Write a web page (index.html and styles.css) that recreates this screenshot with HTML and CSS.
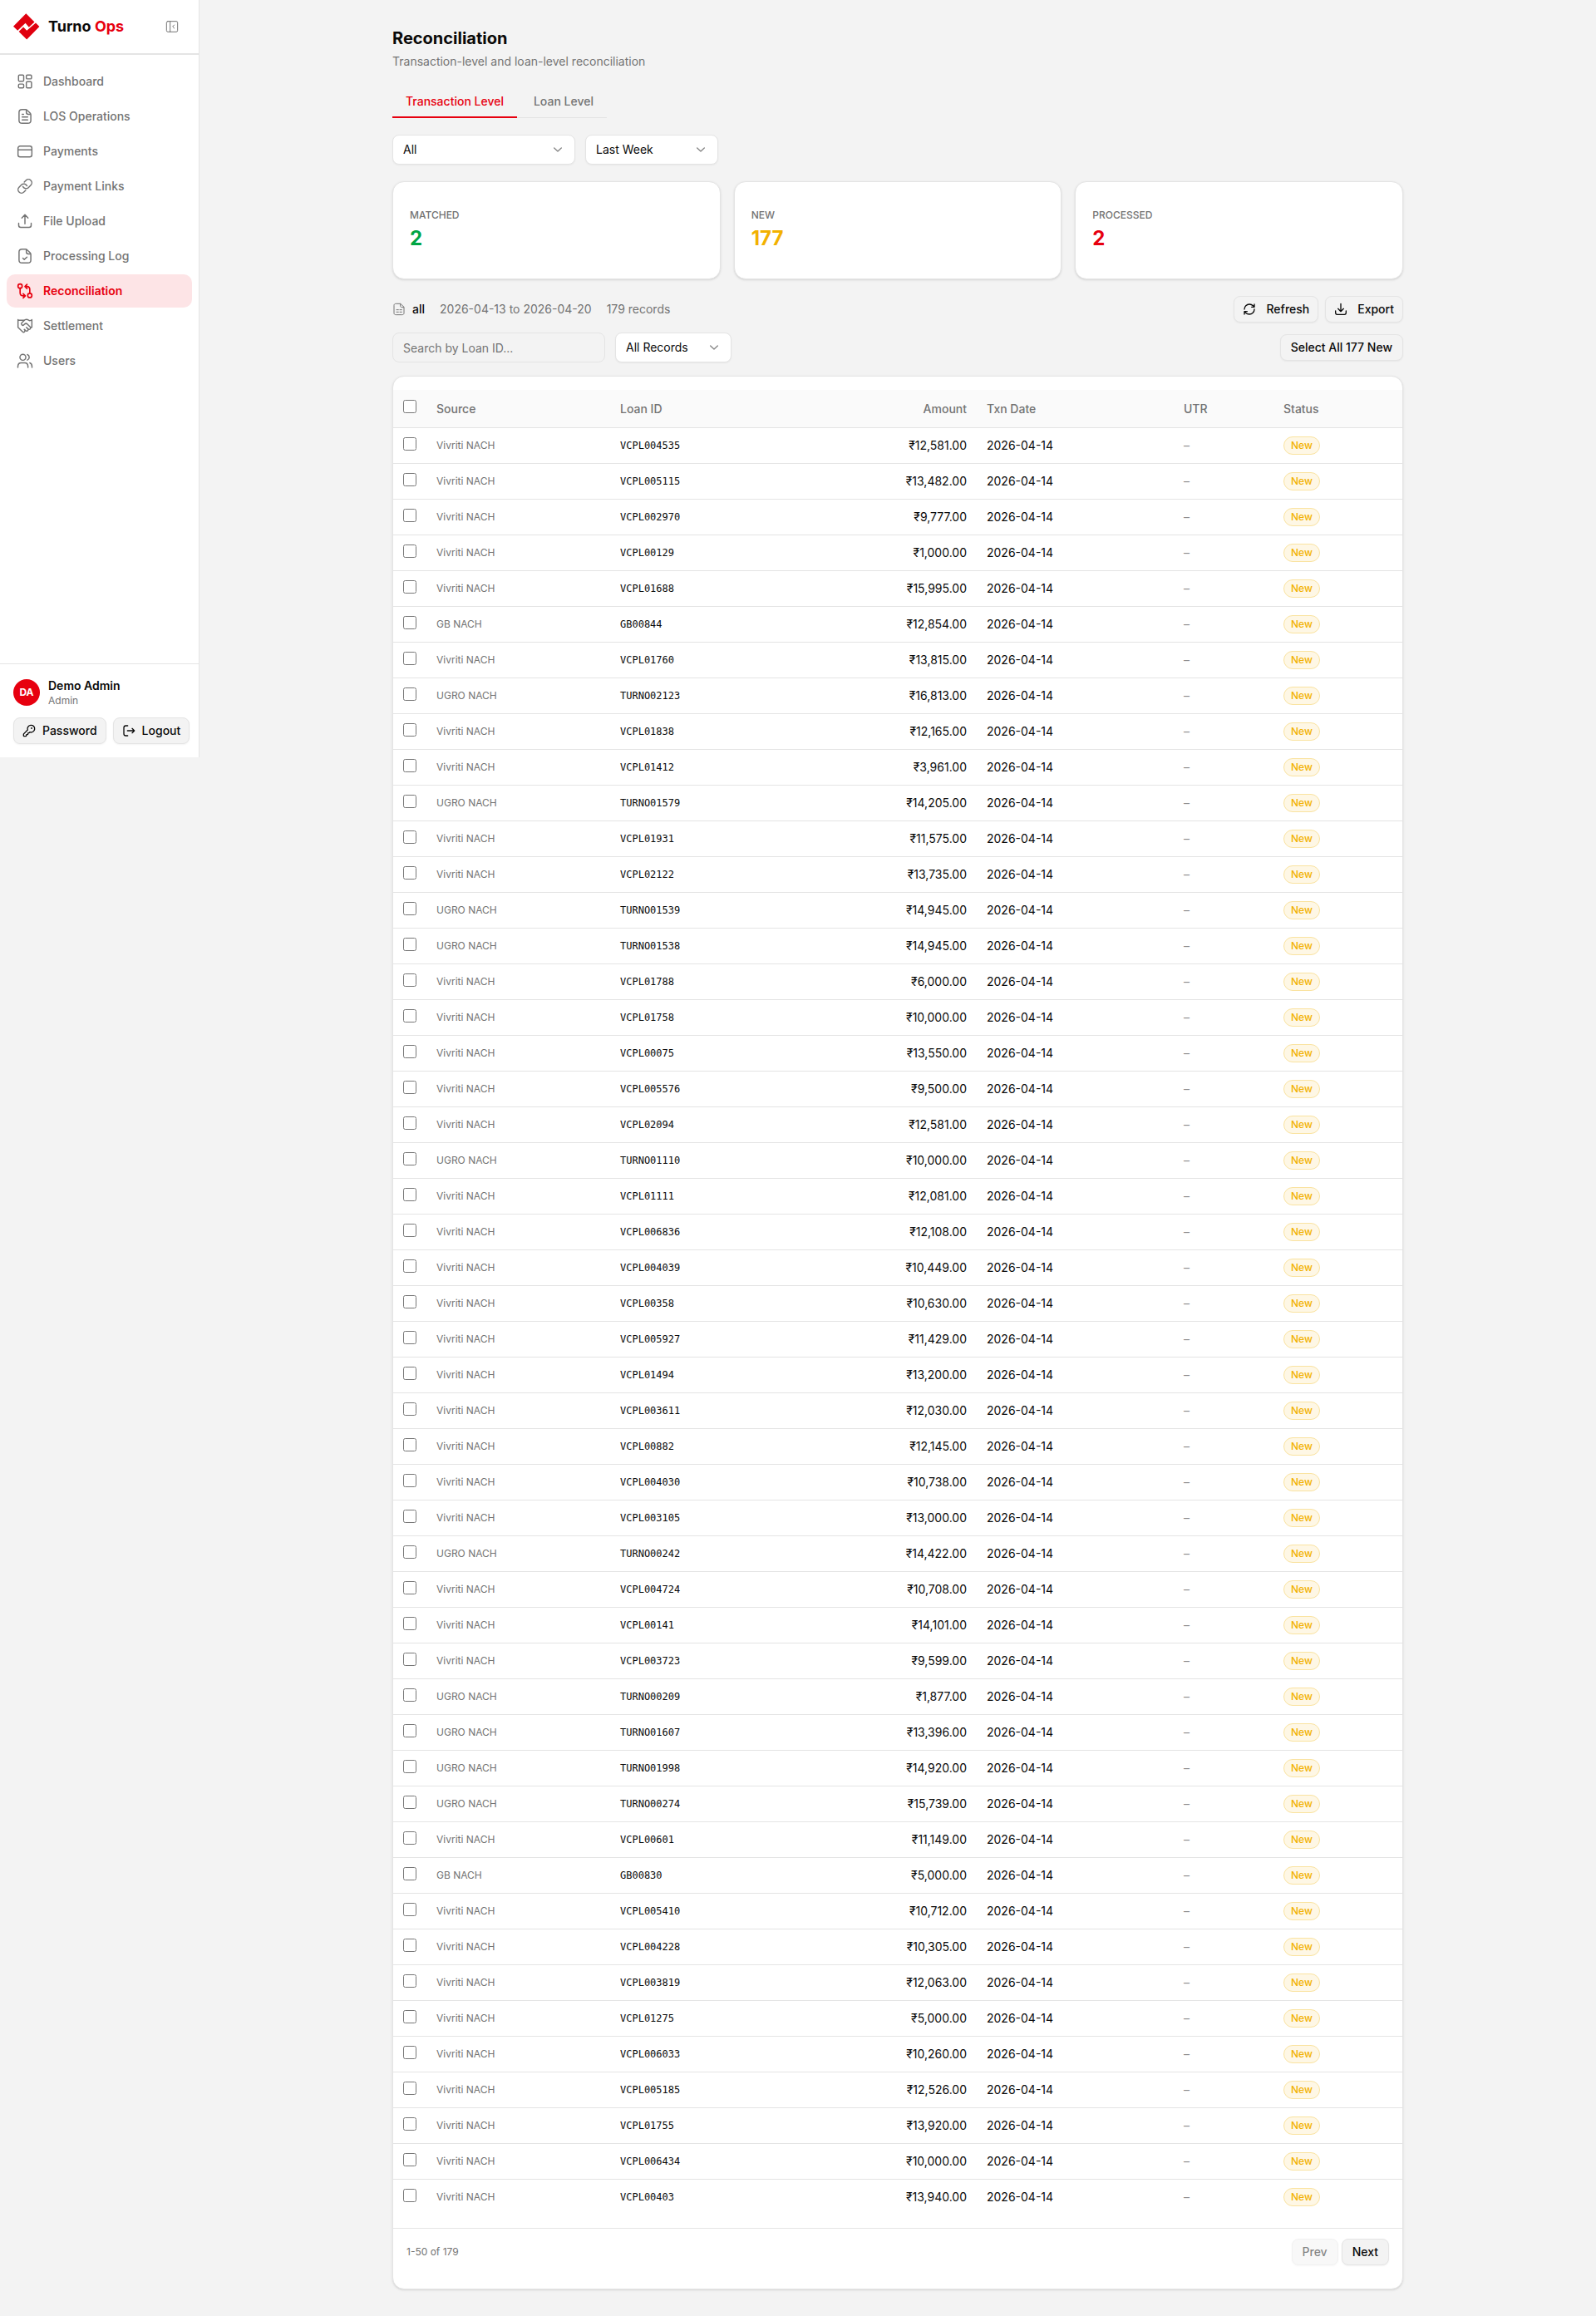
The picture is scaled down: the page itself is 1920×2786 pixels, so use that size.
FILE: index.html
```html
<!DOCTYPE html>
<html lang="en">
<head>
    <meta charset="UTF-8">
    <meta name="viewport" content="width=device-width, initial-scale=1">
    <title>Reconciliation - Turno Ops</title>
    <link rel="stylesheet" href="styles.css">
</head>
<body>
    <aside class="sidebar">
        <div class="brand">
            <svg class="logo" viewBox="0 0 32 32" aria-hidden="true">
                <path d="M0 15.700L15.300.3l10.200 10.200-6.700 6.300-4.200-5L5.200 20.800z"/>
                <path d="M31.400 16L16.200 31.400 6.600 21.900l5.500-5.300 4.100 4.200L27 11.600z"/>
            </svg>
            <span class="brand-name">Turno <span class="accent">Ops</span></span>
            <button class="collapse" aria-label="Collapse sidebar">
                <svg class="icon" viewBox="0 0 24 24"><rect x="2" y="2.5" width="20" height="19" rx="2.5"/><path d="M8.500 2.500v19M16 9l-3 3 3 3"/></svg>
            </button>
        </div>

        <nav class="nav">
            <a href="#" class="nav-link">
                <svg class="icon" viewBox="0 0 24 24"><rect x="2.75" y="2.75" width="7.5" height="9" rx="1.5"/><rect x="14" y="2.75" width="7.5" height="5.5" rx="1.5"/><rect x="2.75" y="15.75" width="7.5" height="5.5" rx="1.5"/><rect x="14" y="12.25" width="7.5" height="9" rx="1.5"/></svg>
                Dashboard
            </a>
            <a href="#" class="nav-link">
                <svg class="icon" viewBox="0 0 24 24"><path d="M13 2H8C5 2 3.500 3.500 3.500 6v12c0 2.500 1.500 4 4.500 4h8c3 0 4.500-1.500 4.500-4V9.500c0-1-.3-1.700-1-2.400L15 3c-.6-.7-1.200-1-2-1zM14 2.500V6c0 2 1 3 3 3h3.200M8 17h8M8 13h8M8 9h2"/></svg>
                LOS Operations
            </a>
            <a href="#" class="nav-link">
                <svg class="icon" viewBox="0 0 24 24"><rect x="2" y="4.5" width="20" height="15.5" rx="3"/><path d="M2 10h20"/></svg>
                Payments
            </a>
            <a href="#" class="nav-link">
                <svg class="icon" viewBox="0 0 24 24"><path d="M9 12.500a5 5 0 0 0 8 1.500l3.500-3.500a4.950 4.950 0 0 0-7-7L11 6"/><path d="M15 11.500a5 5 0 0 0-8-1.500l-3.500 3.500a4.950 4.950 0 0 0 7 7L13 18"/></svg>
                Payment Links
            </a>
            <a href="#" class="nav-link">
                <svg class="icon" viewBox="0 0 24 24"><path d="M3 15v3c0 2 1 3 3 3h12c2 0 3-1 3-3v-3M12 16V3M7.500 7.500L12 2.750l4.500 4.750"/></svg>
                File Upload
            </a>
            <a href="#" class="nav-link">
                <svg class="icon" viewBox="0 0 24 24"><path d="M13 2H8C5 2 3.500 3.500 3.500 6v12c0 2.500 1.500 4 4.500 4h8c3 0 4.500-1.500 4.500-4V9.500c0-1-.3-1.700-1-2.400L15 3c-.6-.7-1.200-1-2-1zM14 2.500V6c0 2 1 3 3 3h3.200M9 15l2 2 4-3.500"/></svg>
                Processing Log
            </a>
            <a href="#" class="nav-link active" aria-current="page">
                <svg class="icon" viewBox="0 0 24 24"><circle cx="5" cy="5" r="3"/><circle cx="19" cy="18.500" r="3"/><path d="M5 8v6.500C5 17.500 6 19 9 19h2.500M9.500 16l3 3-3 3M19 15.500V10c0-3-1-4.500-4-4.500h-2.500M15 2.500l-3 3 3 3"/></svg>
                Reconciliation
            </a>
            <a href="#" class="nav-link">
                <svg class="icon" viewBox="0 0 24 24"><path d="m11 17 2 2a1 1 0 1 0 3-3"/><path d="m14 14 2.500 2.500a1 1 0 1 0 3-3l-3.880-3.880a3 3 0 0 0-4.240 0l-.880.880a1 1 0 1 1-3-3l2.810-2.810a5.790 5.790 0 0 1 7.060-.870l.470.280a2 2 0 0 0 1.420.250L22 4"/><path d="M22 3v11h-2M2 3v11l6.500 6.500a1 1 0 1 0 3-3M2 4h9"/></svg>
                Settlement
            </a>
            <a href="#" class="nav-link">
                <svg class="icon" viewBox="0 0 24 24"><circle cx="9" cy="7" r="4.250"/><path d="M1.800 21.500v-1c0-3.500 1.700-5.500 4.700-5.500h5.200c3 0 4.700 2 4.700 5.500v1M15.500 3a4.300 4.300 0 0 1 0 8M19 15c2.300.7 3.200 2.800 3.200 5.500v1"/></svg>
                Users
            </a>
        </nav>

        <div class="account">
            <div class="account-user">
                <span class="avatar">DA</span>
                <div>
                    <div class="account-name">Demo Admin</div>
                    <div class="account-role">Admin</div>
                </div>
            </div>
            <div class="account-actions">
                <button class="btn btn-icon">
                    <svg class="icon" viewBox="0 0 24 24"><path d="M2.600 17.400A2 2 0 0 0 2 18.800V21a1 1 0 0 0 1 1h3a1 1 0 0 0 1-1v-1a1 1 0 0 1 1-1h1a1 1 0 0 0 1-1v-1a1 1 0 0 1 1-1h.2a2 2 0 0 0 1.400-.6l.8-.8a6.500 6.500 0 1 0-4-4z"/><circle cx="16.500" cy="7.500" r=".5"/></svg>
                    Password
                </button>
                <button class="btn btn-icon">
                    <svg class="icon" viewBox="0 0 24 24"><path d="M10 3H6.500C4 3 3 4 3 6.500v11C3 20 4 21 6.500 21H10M9.500 12H22M18 8l4 4-4 4"/></svg>
                    Logout
                </button>
            </div>
        </div>
    </aside>

    <main class="main">
        <div class="container">
            <header>
                <h1>Reconciliation</h1>
                <p class="subtitle">Transaction-level and loan-level reconciliation</p>
            </header>

            <div class="tabs" role="tablist">
                <button class="tab active" role="tab" aria-selected="true">Transaction Level</button>
                <button class="tab" role="tab" aria-selected="false">Loan Level</button>
            </div>

            <div class="filters">
                <div class="select select-source">
                    <select aria-label="Source"><option>All</option></select>
                    <svg class="icon chevron" viewBox="0 0 24 24"><path d="M5.500 9l6.500 6 6.500-6"/></svg>
                </div>
                <div class="select select-period">
                    <select aria-label="Period"><option>Last Week</option></select>
                    <svg class="icon chevron" viewBox="0 0 24 24"><path d="M5.500 9l6.500 6 6.500-6"/></svg>
                </div>
            </div>

            <div class="stats">
                <div class="card stat">
                    <div class="stat-label">Matched</div>
                    <div class="stat-value green">2</div>
                </div>
                <div class="card stat">
                    <div class="stat-label">New</div>
                    <div class="stat-value amber">177</div>
                </div>
                <div class="card stat">
                    <div class="stat-label">Processed</div>
                    <div class="stat-value accent">2</div>
                </div>
            </div>

            <section class="records">
                <div class="toolbar">
                    <div class="summary">
                        <span class="summary-source">
                            <svg class="icon" viewBox="0 0 24 24"><path d="M14 2H6.500C4.500 2 3 3 3 5v14c0 2 1.500 3 3.500 3h11c2 0 3.500-1 3.500-3V8.500zM14.500 2.500V6c0 1.500 1 2.500 2.500 2.500h3.500M7.500 13H11M13.500 13H17M7.500 17H11M13.500 17H17"/></svg>
                            <strong>all</strong>
                        </span>
                        <span>2026-04-13 to 2026-04-20</span>
                        <span>179 records</span>
                    </div>
                    <div class="actions">
                        <button class="btn btn-wide-icon">
                            <svg class="icon" viewBox="0 0 24 24"><path d="M3 12a9 9 0 0 1 9-9 9.750 9.750 0 0 1 6.740 2.740L21 8M21 3v5h-5M21 12a9 9 0 0 1-9 9 9.750 9.750 0 0 1-6.740-2.740L3 16M8 16H3v5"/></svg>
                            Refresh
                        </button>
                        <button class="btn btn-wide-icon">
                            <svg class="icon" viewBox="0 0 24 24"><path d="M2.500 15v3c0 2 1 3.500 3 3.500h13c2 0 3-1.500 3-3.500v-3M12 2v14M7 11l5 5 5-5"/></svg>
                            Export
                        </button>
                    </div>
                </div>

                <div class="toolbar">
                    <div class="filters">
                        <input type="text" class="search" placeholder="Search by Loan ID..." aria-label="Search by Loan ID">
                        <div class="select select-records">
                            <select aria-label="Records"><option>All Records</option></select>
                            <svg class="icon chevron" viewBox="0 0 24 24"><path d="M5.500 9l6.500 6 6.500-6"/></svg>
                        </div>
                    </div>
                    <button class="btn">Select All 177 New</button>
                </div>
            </section>

            <div class="card table-card">
                <table>
                    <colgroup>
                        <col class="col-check">
                        <col class="col-source">
                        <col class="col-loan">
                        <col class="col-amount">
                        <col class="col-date">
                        <col class="col-utr">
                        <col class="col-status">
                    </colgroup>
                    <thead>
                        <tr>
                            <th><input type="checkbox" aria-label="Select all"></th>
                            <th>Source</th>
                            <th>Loan ID</th>
                            <th class="amount">Amount</th>
                            <th>Txn Date</th>
                            <th>UTR</th>
                            <th>Status</th>
                        </tr>
                    </thead>
                    <tbody id="rows"></tbody>
                </table>
                <div class="pager">
                    <span>1-50 of 179</span>
                    <div class="pager-buttons">
                        <button class="btn" disabled>Prev</button>
                        <button class="btn">Next</button>
                    </div>
                </div>
            </div>
        </div>
    </main>

    <script>
        const sources = { V: 'Vivriti NACH', U: 'UGRO NACH', G: 'GB NACH' };

        // source, loan id, amount
        const records = [
            ['V', 'VCPL004535', '12,581'],
            ['V', 'VCPL005115', '13,482'],
            ['V', 'VCPL002970', '9,777'],
            ['V', 'VCPL00129', '1,000'],
            ['V', 'VCPL01688', '15,995'],
            ['G', 'GB00844', '12,854'],
            ['V', 'VCPL01760', '13,815'],
            ['U', 'TURNO02123', '16,813'],
            ['V', 'VCPL01838', '12,165'],
            ['V', 'VCPL01412', '3,961'],
            ['U', 'TURNO01579', '14,205'],
            ['V', 'VCPL01931', '11,575'],
            ['V', 'VCPL02122', '13,735'],
            ['U', 'TURNO01539', '14,945'],
            ['U', 'TURNO01538', '14,945'],
            ['V', 'VCPL01788', '6,000'],
            ['V', 'VCPL01758', '10,000'],
            ['V', 'VCPL00075', '13,550'],
            ['V', 'VCPL005576', '9,500'],
            ['V', 'VCPL02094', '12,581'],
            ['U', 'TURNO01110', '10,000'],
            ['V', 'VCPL01111', '12,081'],
            ['V', 'VCPL006836', '12,108'],
            ['V', 'VCPL004039', '10,449'],
            ['V', 'VCPL00358', '10,630'],
            ['V', 'VCPL005927', '11,429'],
            ['V', 'VCPL01494', '13,200'],
            ['V', 'VCPL003611', '12,030'],
            ['V', 'VCPL00882', '12,145'],
            ['V', 'VCPL004030', '10,738'],
            ['V', 'VCPL003105', '13,000'],
            ['U', 'TURNO00242', '14,422'],
            ['V', 'VCPL004724', '10,708'],
            ['V', 'VCPL00141', '14,101'],
            ['V', 'VCPL003723', '9,599'],
            ['U', 'TURNO00209', '1,877'],
            ['U', 'TURNO01607', '13,396'],
            ['U', 'TURNO01998', '14,920'],
            ['U', 'TURNO00274', '15,739'],
            ['V', 'VCPL00601', '11,149'],
            ['G', 'GB00830', '5,000'],
            ['V', 'VCPL005410', '10,712'],
            ['V', 'VCPL004228', '10,305'],
            ['V', 'VCPL003819', '12,063'],
            ['V', 'VCPL01275', '5,000'],
            ['V', 'VCPL006033', '10,260'],
            ['V', 'VCPL005185', '12,526'],
            ['V', 'VCPL01755', '13,920'],
            ['V', 'VCPL006434', '10,000'],
            ['V', 'VCPL00403', '13,940']
        ];

        document.getElementById('rows').innerHTML = records.map(([source, loan, amount]) => `
            <tr>
                <td><input type="checkbox" aria-label="Select ${loan}"></td>
                <td class="source">${sources[source]}</td>
                <td class="loan">${loan}</td>
                <td class="amount">₹${amount}.00</td>
                <td>2026-04-14</td>
                <td class="empty">–</td>
                <td><span class="badge">New</span></td>
            </tr>`).join('');
    </script>
</body>
</html>
```
FILE: styles.css
```css
* {
    box-sizing: border-box;
}

body {
    margin: 0;
    display: flex;
    align-items: flex-start;
    background-color: #f3f3f3;
    color: #0a0a0a;
    font-family: "Inter", sans-serif;
    font-size: 14px;
    line-height: 20px;
}

button, input, select {
    font: inherit;
    color: inherit;
}

button {
    cursor: pointer;
}

h1 {
    margin: 0 0 4px;
    font-size: 20px;
    line-height: 28px;
    font-weight: 700;
}

.icon {
    width: 16px;
    height: 16px;
    flex-shrink: 0;
    fill: none;
    stroke: currentColor;
    stroke-width: 2;
    stroke-linecap: round;
    stroke-linejoin: round;
}

.accent {
    color: #e7000f;
}

.green {
    color: #00a544;
}

.amber {
    color: #f2b100;
}

/* Sidebar */
.sidebar {
    position: sticky;
    top: 0;
    display: flex;
    flex-direction: column;
    flex-shrink: 0;
    width: 240px;
    min-height: 911px;
    background-color: #fff;
    border-right: 1px solid #e4e4e4;
}

.brand {
    display: flex;
    align-items: center;
    gap: 10px;
    padding: 16px;
    border-bottom: 2px solid #e4e4e4;
}

.logo {
    width: 32px;
    height: 32px;
    fill: #e0000f;
}

.brand-name {
    flex: 1;
    font-size: 18px;
    font-weight: 700;
}

.collapse {
    display: flex;
    padding: 8px;
    border: 0;
    background: none;
    color: #757575;
}

.collapse .icon {
    stroke-width: 1.5;
}

.nav {
    flex: 1;
    display: flex;
    flex-direction: column;
    gap: 2px;
    padding: 12px 8px;
}

.nav-link {
    display: flex;
    align-items: center;
    gap: 12px;
    padding: 10px 12px;
    border-radius: 10px;
    color: #737373;
    font-weight: 500;
    text-decoration: none;
}

.nav-link .icon {
    width: 20px;
    height: 20px;
    stroke-width: 1.75;
}

.nav-link.active {
    background-color: #fde4e6;
    color: #e7000f;
    font-weight: 600;
}

.nav-link.active .icon {
    stroke-width: 2;
}

.account {
    padding: 16px;
    border-top: 1px solid #e4e4e4;
}

.account-user {
    display: flex;
    align-items: center;
    gap: 10px;
    margin-bottom: 12px;
}

.avatar {
    width: 32px;
    border-radius: 50%;
    background-color: #e7000f;
    color: #fff;
    font-size: 12px;
    font-weight: 700;
    line-height: 32px;
    text-align: center;
}

.account-name {
    font-weight: 600;
}

.account-role {
    color: #737373;
    font-size: 12px;
    line-height: 16px;
}

.account-actions {
    display: flex;
    gap: 8px;
}

/* Controls */
.btn {
    display: inline-flex;
    align-items: center;
    height: 32px;
    padding: 0 12px;
    border: 1px solid #e4e4e4;
    border-radius: 8px;
    background-color: #f3f3f3;
    box-shadow: 0 1px 2px rgba(0, 0, 0, 0.05);
    font-weight: 500;
    white-space: nowrap;
}

.btn:disabled {
    opacity: 0.5;
    cursor: default;
}

.btn-icon {
    gap: 8px;
    padding: 0 10px;
}

.btn-wide-icon {
    gap: 12px;
    padding: 0 10px;
}

.select {
    position: relative;
}

.select select {
    appearance: none;
    display: block;
    width: 100%;
    height: 36px;
    padding: 0 32px 0 12px;
    border: 1px solid #e4e4e4;
    border-radius: 8px;
    background-color: #fff;
    box-shadow: 0 1px 2px rgba(0, 0, 0, 0.05);
}

.chevron {
    position: absolute;
    top: 10px;
    right: 13px;
    color: #858585;
    pointer-events: none;
}

.select-source {
    width: 220px;
}

.select-period {
    width: 160px;
}

.select-records {
    width: 140px;
}

.search {
    width: 256px;
    height: 36px;
    padding: 0 12px;
    border: 1px solid #e4e4e4;
    border-radius: 8px;
    background: none;
}

.search::placeholder {
    color: #737373;
}

/* Page */
.main {
    flex: 1;
    min-width: 0;
}

.container {
    display: flex;
    flex-direction: column;
    gap: 20px;
    max-width: 1280px;
    margin: 0 auto;
    padding: 32px;
}

.subtitle {
    margin: 0;
    color: #737373;
}

.tabs {
    display: flex;
    align-self: flex-start;
    gap: 4px;
    border-bottom: 1px solid #e4e4e4;
}

.tab {
    margin-bottom: -1px;
    padding: 8px 16px;
    border: 0;
    border-bottom: 2px solid transparent;
    background: none;
    color: #737373;
    font-weight: 500;
}

.tab.active {
    border-color: #e7000f;
    color: #e7000f;
}

.filters {
    display: flex;
    gap: 12px;
}

.card {
    border: 1px solid #e4e4e4;
    border-radius: 14px;
    background-color: #fff;
    box-shadow: 0 1px 3px rgba(0, 0, 0, 0.1), 0 1px 2px -1px rgba(0, 0, 0, 0.1);
}

.stats {
    display: grid;
    grid-template-columns: repeat(3, 1fr);
    gap: 16px;
}

.stat {
    padding: 32px 20px;
}

.stat-label {
    margin-bottom: 4px;
    color: #737373;
    font-size: 12px;
    font-weight: 500;
    line-height: 16px;
    text-transform: uppercase;
}

.stat-value {
    font-size: 24px;
    font-weight: 700;
    line-height: 32px;
}

.records {
    display: flex;
    flex-direction: column;
    gap: 12px;
}

.toolbar {
    display: flex;
    align-items: center;
    justify-content: space-between;
}

.summary {
    display: flex;
    gap: 18px;
    color: #737373;
}

.summary-source {
    display: flex;
    align-items: center;
    gap: 8px;
}

.summary-source .icon {
    stroke-width: 1.5;
}

.summary-source strong {
    color: #0a0a0a;
    font-weight: 500;
}

.actions {
    display: flex;
    gap: 8px;
}

/* Table */
.table-card {
    margin-top: -4px;
    padding: 16px 0;
}

table {
    width: 100%;
    table-layout: fixed;
    border-collapse: separate;
    border-spacing: 0;
}

.col-check {
    width: 40px;
}

.col-source, .col-loan {
    width: 221px;
}

.col-amount {
    width: 220px;
}

.col-date {
    width: 237px;
}

.col-utr {
    width: 120px;
}

.col-status {
    width: 155px;
}

th, td {
    height: 43px;
    padding: 0 12px;
    border-bottom: 1px solid #e4e4e4;
    text-align: left;
    white-space: nowrap;
}

th {
    height: 46px;
    background-color: #fafafa;
    color: #737373;
    font-weight: 500;
}

tbody tr:last-child td {
    height: 42px;
    border-bottom: 0;
}

td input, th input {
    width: 16px;
    height: 16px;
    margin: 0;
}

.source {
    color: #737373;
    font-size: 12px;
}

.loan {
    font-family: "DejaVu Sans Mono", monospace;
    font-size: 12px;
}

.amount {
    text-align: right;
}

.empty {
    color: #8c8c8c;
}

.badge {
    display: inline-block;
    padding: 2px 8px;
    border: 1px solid #fae3a0;
    border-radius: 11px;
    background-color: #fef7e5;
    color: #f2b100;
    font-size: 12px;
    font-weight: 500;
    line-height: 16px;
    vertical-align: middle;
}

.pager {
    display: flex;
    align-items: center;
    justify-content: space-between;
    margin-top: 16px;
    padding: 12px 16px;
    border-top: 1px solid #e4e4e4;
    color: #737373;
    font-size: 12px;
}

.pager-buttons {
    display: flex;
    gap: 4px;
    color: #0a0a0a;
    font-size: 14px;
}
```
